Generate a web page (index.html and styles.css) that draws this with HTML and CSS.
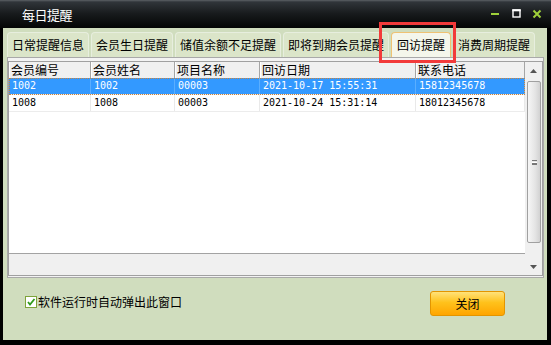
FILE: index.html
```html
<!DOCTYPE html>
<html lang="zh-CN">
<head>
    <meta charset="UTF-8">
    <title>每日提醒</title>
    <link rel="stylesheet" href="styles.css">
</head>
<body>
    <div class="window">
        <div class="titlebar">
            <span class="title">每日提醒</span>
            <svg class="controls" width="52" height="28" viewBox="0 0 52 28">
                <rect x="1" y="13" width="8" height="2" fill="#9fd13a"/>
                <rect x="23" y="10" width="7" height="7" fill="none" stroke="#fff" stroke-width="1.4"/>
                <rect x="22.3" y="9.3" width="8.4" height="2" fill="#fff"/>
                <path d="M43.5 10.5 L50.5 17.5 M50.5 10.5 L43.5 17.5" stroke="#9fd13a" stroke-width="2"/>
            </svg>
        </div>

        <div class="client">
            <div class="tabs">
                <div class="tab">日常提醒信息</div>
                <div class="tab">会员生日提醒</div>
                <div class="tab">储值余额不足提醒</div>
                <div class="tab">即将到期会员提醒</div>
                <div class="tab active">回访提醒</div>
                <div class="tab">消费周期提醒</div>
            </div>

            <div class="page">
                <div class="list">
                    <div class="grid">
                        <div class="row head">
                            <div class="cell">会员编号</div>
                            <div class="cell">会员姓名</div>
                            <div class="cell">项目名称</div>
                            <div class="cell">回访日期</div>
                            <div class="cell">联系电话</div>
                        </div>
                        <div class="row selected">
                            <div class="cell num">1002</div>
                            <div class="cell num">1002</div>
                            <div class="cell num">00003</div>
                            <div class="cell num">2021-10-17 15:55:31</div>
                            <div class="cell num">15812345678</div>
                        </div>
                        <div class="row">
                            <div class="cell num">1008</div>
                            <div class="cell num">1008</div>
                            <div class="cell num">00003</div>
                            <div class="cell num">2021-10-24 15:31:14</div>
                            <div class="cell num">18012345678</div>
                        </div>
                        <div class="filler"></div>
                        <div class="footer"></div>
                    </div>
                    <div class="vscroll">
                        <div class="arrow">
                            <svg width="7" height="4" viewBox="0 0 7 4"><path d="M0 4 L3.5 0 L7 4 Z" fill="#555"/></svg>
                        </div>
                        <div class="track">
                            <div class="thumb"><span class="grip"></span></div>
                        </div>
                        <div class="arrow">
                            <svg width="7" height="4" viewBox="0 0 7 4"><path d="M0 0 L3.5 4 L7 0 Z" fill="#555"/></svg>
                        </div>
                    </div>
                </div>
            </div>

            <div class="bottom">
                <label class="check">
                    <svg width="12" height="12" viewBox="0 0 12 12">
                        <rect x="0.5" y="0.5" width="11" height="11" fill="#fff" stroke="#7ea33a"/>
                        <path d="M3 6 L5 8.5 L9.5 3" fill="none" stroke="#2f9a1c" stroke-width="1.8"/>
                    </svg>
                    <span>软件运行时自动弹出此窗口</span>
                </label>
                <button class="btn">关闭</button>
            </div>
        </div>

        <div class="highlight"></div>
    </div>
</body>
</html>
```

FILE: styles.css
```css
* {
    box-sizing: border-box;
}
body {
    margin: 0;
    background: #000;
    font-family: "Noto Sans CJK SC", "Noto Sans", sans-serif;
    font-size: 12px;
    color: #000;
}
.window {
    position: relative;
    width: 551px;
    height: 345px;
    background: #000;
    overflow: hidden;
}
.titlebar {
    height: 28px;
    display: flex;
    align-items: center;
    padding: 0 9px 0 22px;
    background: linear-gradient(#5c6165 0, #30353a 2px, #171a1c 14px, #040505 100%);
    color: #fff;
}
.title {
    flex: 1;
    font-size: 13px;
    letter-spacing: -0.5px;
}
.client {
    margin: 0 4px 0 3px;
    height: 312px;
    background: #d0ddbe;
    display: flex;
    flex-direction: column;
}
.tabs {
    display: flex;
    align-items: flex-end;
    gap: 2px;
    height: 29px;
    padding-left: 4px;
}
.tab {
    height: 25px;
    line-height: 23px;
    padding: 0 4px;
    background: #dbe5c9;
    border: 1px solid #e7eede;
    border-bottom: none;
    border-radius: 4px 4px 0 0;
    white-space: nowrap;
}
.tab.active {
    padding: 0 5px;
    background: #f4f6eb;
    border-color: #efc273;
}
.page {
    margin: 0 3px 0 4px;
    height: 221px;
    padding: 3px 0 1px 0;
    background: #f3f3f3;
    border: 1px solid #a9a9a9;
}
.list {
    display: flex;
    height: 100%;
    border: 1px solid #a0a0a0;
    background: #fff;
}
.grid {
    width: 516px;
    display: flex;
    flex-direction: column;
}
.row {
    display: grid;
    grid-template-columns: 82px 84px 85px 156px 109px;
    height: 17px;
    border-bottom: 1px solid #ececec;
}
.cell {
    padding-left: 3px;
    line-height: 16px;
    border-right: 1px solid #e9e9e9;
    white-space: nowrap;
    overflow: hidden;
}
.head {
    height: 16px;
    background: #f0f0f0;
    border-bottom: none;
}
.head .cell {
    padding-left: 2px;
    line-height: 16px;
    border-right: 1px solid #a5a5a5;
    box-shadow: inset 1px 0 #fff;
}
.num {
    font-family: "DejaVu Sans Mono", monospace;
    font-size: 10px;
}
.selected {
    background: #3399ff;
    color: #fff;
    outline: 1px dotted #c8823c;
    outline-offset: -1px;
}
.selected .cell {
    border-right-color: #5aaeff;
}
.filler {
    flex: 1;
}
.footer {
    height: 22px;
    background: #f0f0f0;
    border-top: 1px solid #a3a3a3;
}
.vscroll {
    width: 17px;
    display: flex;
    flex-direction: column;
    background: #f0f0f0;
}
.arrow {
    height: 17px;
    display: flex;
    align-items: center;
    justify-content: center;
}
.track {
    flex: 1;
    padding: 2px 1px 0 2px;
}
.thumb {
    height: 162px;
    border: 1px solid #a0a0a0;
    border-radius: 2px;
    background: linear-gradient(90deg, #f6f6f6, #e4e4e4 60%, #d2d2d2);
    display: flex;
    align-items: center;
    justify-content: center;
}
.grip {
    width: 5px;
    height: 5px;
    border-top: 1px solid #777;
    border-bottom: 1px solid #777;
    background: linear-gradient(#fff 0 1px, #777 1px 2px, transparent 2px);
    background-position: 0 1px;
    background-repeat: no-repeat;
}
.bottom {
    flex: 1;
    display: flex;
    align-items: flex-start;
    justify-content: space-between;
    padding: 13px 42px 0 22px;
}
.check {
    display: flex;
    align-items: center;
    gap: 1px;
    margin-top: 3px;
    line-height: 16px;
}
.btn {
    width: 75px;
    height: 25px;
    padding: 0;
    font-family: inherit;
    font-size: 12px;
    color: #000;
    border: 1px solid #e39500;
    border-radius: 3px;
    background: linear-gradient(#ffe27a 0, #ffc21c 45%, #ffa500 100%);
}
.highlight {
    position: absolute;
    left: 379px;
    top: 22px;
    width: 77px;
    height: 41px;
    border: 3px solid #f23a3a;
}
```
